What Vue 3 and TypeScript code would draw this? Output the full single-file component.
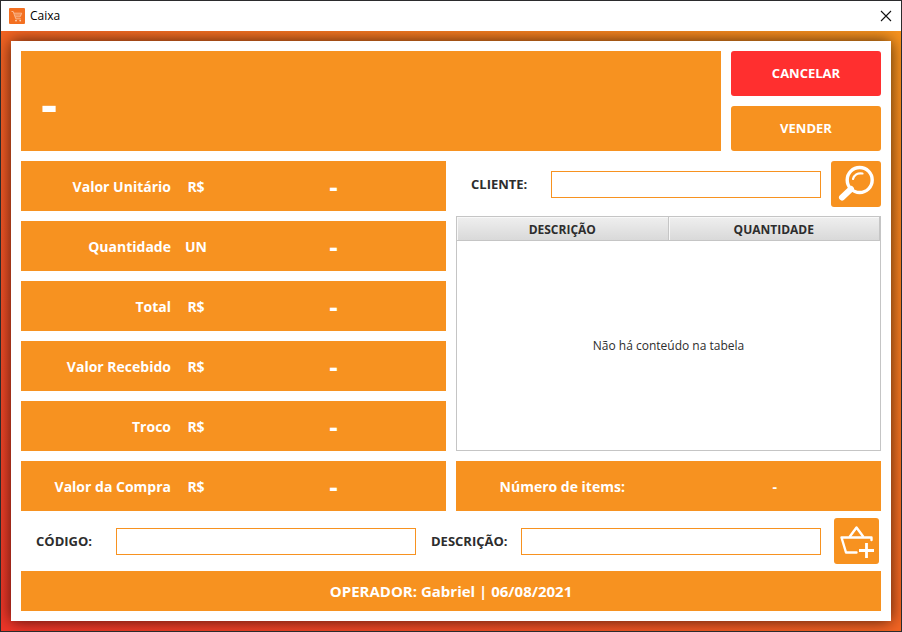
<script setup lang="ts">
import { ref } from 'vue'

interface SaleLine {
  label: string
  unit: string
  value: string
}

const saleLines: SaleLine[] = [
  { label: 'Valor Unitário', unit: 'R$', value: '-' },
  { label: 'Quantidade', unit: 'UN', value: '-' },
  { label: 'Total', unit: 'R$', value: '-' },
  { label: 'Valor Recebido', unit: 'R$', value: '-' },
  { label: 'Troco', unit: 'R$', value: '-' },
  { label: 'Valor da Compra', unit: 'R$', value: '-' },
]

const customer = ref('')
const code = ref('')
const description = ref('')
const operator = 'Gabriel'
const date = '06/08/2021'
</script>

<template>
  <div class="window">
    <header class="titlebar">
      <svg class="app-icon" viewBox="0 0 16 16" aria-hidden="true">
        <rect width="16" height="16" rx="1" fill="#f37021" />
        <path d="M2.500 3.500h1.700l2.600 7.300h5M5 5.200h7.700l-1.500 3.600H6.200M6 7h6" fill="none" stroke="#f9c19c" stroke-width="0.900" />
        <circle cx="7" cy="12.600" r="0.900" fill="#fbd5bb" />
        <circle cx="11.200" cy="12.600" r="0.900" fill="#fbd5bb" />
      </svg>
      <span class="title">Caixa</span>
      <button class="close" type="button" aria-label="Fechar">
        <svg viewBox="0 0 12 12" aria-hidden="true">
          <path d="M1 1l10 10M11 1L1 11" stroke="#111" stroke-width="1.100" fill="none" />
        </svg>
      </button>
    </header>

    <div class="backdrop">
      <main class="panel">
        <section class="top">
          <h1 class="product">-</h1>
          <div class="actions">
            <button class="btn danger" type="button">CANCELAR</button>
            <button class="btn" type="button">VENDER</button>
          </div>
        </section>

        <section class="middle">
          <dl class="lines">
            <div v-for="line in saleLines" :key="line.label" class="line">
              <dt>{{ line.label }}</dt>
              <dd class="unit">{{ line.unit }}</dd>
              <dd class="value">{{ line.value }}</dd>
            </div>
          </dl>

          <div class="side">
            <div class="customer">
              <label for="customer">CLIENTE:</label>
              <input id="customer" v-model="customer" type="text" />
              <button class="btn icon" type="button" aria-label="Buscar cliente">
                <svg viewBox="0 0 50 46" aria-hidden="true">
                  <circle cx="28.700" cy="19" r="12.500" fill="none" stroke="#fff" stroke-width="3.400" />
                  <path d="M20 28L11 36.500" stroke="#fff" stroke-width="6" stroke-linecap="round" />
                  <path d="M22 18c1-3.800 4.500-6.400 9.500-5.500" fill="none" stroke="#fff" stroke-width="2.200" stroke-linecap="round" />
                </svg>
              </button>
            </div>

            <div class="grid">
              <table>
                <thead>
                  <tr>
                    <th scope="col">DESCRIÇÃO</th>
                    <th scope="col">QUANTIDADE</th>
                  </tr>
                </thead>
                <tbody>
                  <tr>
                    <td colspan="2">Não há conteúdo na tabela</td>
                  </tr>
                </tbody>
              </table>
            </div>

            <div class="count">
              <span>Número de items:</span>
              <span>-</span>
            </div>
          </div>
        </section>

        <section class="entry">
          <label for="code">CÓDIGO:</label>
          <input id="code" v-model="code" type="text" />
          <label for="description">DESCRIÇÃO:</label>
          <input id="description" v-model="description" type="text" />
          <button class="btn icon basket" type="button" aria-label="Adicionar item">
            <svg viewBox="0 0 45 46" aria-hidden="true">
              <path d="M37.500 22v-2.500H7.500L12 34.500h10.500" fill="none" stroke="#fff" stroke-width="2.400" stroke-linejoin="round" stroke-linecap="round" />
              <path d="M15.500 19L22.500 9.500L29.500 19" fill="none" stroke="#fff" stroke-width="2.400" stroke-linejoin="round" />
              <path d="M32.500 25v15M25 32.500h15" fill="none" stroke="#fff" stroke-width="2.800" />
            </svg>
          </button>
        </section>

        <footer class="operator">OPERADOR: {{ operator }} | {{ date }}</footer>
      </main>
    </div>
  </div>
</template>

<style>
body {
  margin: 0;
}
</style>

<style scoped>
.window {
  --orange: #f79220;
  box-sizing: border-box;
  min-height: 100vh;
  display: flex;
  flex-direction: column;
  border: 1px solid #2b2b2d;
  background: #fff;
  color: #2d2d2d;
  font-family: 'Open Sans', 'Noto Sans', sans-serif;
  font-size: 12px;
}

.titlebar {
  display: flex;
  align-items: center;
  gap: 5px;
  height: 30px;
  padding: 0 7px 0 8px;
}

.app-icon {
  width: 16px;
  height: 16px;
}

.title {
  flex: 1;
  color: #000;
  line-height: 16px;
}

.close {
  display: flex;
  padding: 2px;
  border: 0;
  background: none;
}

.close svg {
  width: 12px;
  height: 12px;
}

.backdrop {
  flex: 1;
  display: flex;
  padding: 10px;
  background: linear-gradient(to top right, #ef3528, #f7931e);
  overflow: hidden;
}

.panel {
  flex: 1;
  display: flex;
  flex-direction: column;
  padding: 10px;
  background: #fff;
  box-shadow: 0 0 15px rgba(0, 0, 0, 0.7);
}

.top {
  display: flex;
  gap: 10px;
  margin-bottom: 10px;
}

.product {
  flex: 1;
  display: flex;
  align-items: center;
  min-height: 100px;
  margin: 0;
  padding: 4px 20px 0;
  box-sizing: border-box;
  background: var(--orange);
  color: #fff;
  font-size: 50px;
  line-height: 60px;
}

.actions {
  display: flex;
  flex-direction: column;
  gap: 10px;
  width: 150px;
}

.btn {
  flex: 1;
  padding: 0 0 2px;
  border: 0;
  border-radius: 3px;
  background: var(--orange);
  color: #fff;
  font: bold 13px 'Open Sans', 'Noto Sans', sans-serif;
}

.danger {
  background: #ff2f2f;
}

.icon {
  flex: none;
  display: flex;
  width: 50px;
  height: 46px;
  padding: 0;
}

.icon svg {
  width: 100%;
  height: 100%;
}

.middle {
  flex: 1;
  display: grid;
  grid-template-columns: 1fr 1fr;
  gap: 10px;
}

.lines {
  display: grid;
  grid-auto-rows: 1fr;
  gap: 10px;
  margin: 0;
}

.line {
  display: grid;
  grid-template-columns: 150px 50px 1fr;
  align-items: center;
  min-height: 50px;
  background: var(--orange);
  color: #fff;
  font-size: 14px;
  font-weight: bold;
}

.line dt {
  text-align: right;
}

.line dd {
  margin: 0;
  text-align: center;
}

.line .value {
  padding-top: 2px;
  font-size: 26px;
  line-height: 30px;
}

.side {
  display: flex;
  flex-direction: column;
  min-width: 0;
}

.customer {
  display: flex;
  align-items: center;
  gap: 10px;
  margin-bottom: 9px;
  padding-left: 15px;
}

.customer label {
  width: 70px;
}

.customer input {
  flex: 1;
}

label {
  font-size: 13px;
  line-height: 18px;
  font-weight: bold;
}

input {
  box-sizing: border-box;
  min-width: 0;
  height: 27px;
  padding: 0 6px;
  border: 1px solid var(--orange);
  background: #fff;
  font: 12px 'Open Sans', 'Noto Sans', sans-serif;
  outline: none;
}

.grid {
  flex: 1;
  display: flex;
  border: 1px solid #c5c5c5;
}

table {
  width: 100%;
  border-collapse: separate;
  border-spacing: 0;
  table-layout: fixed;
}

th {
  height: 21px;
  box-sizing: content-box;
  padding: 2px 0 0;
  border-right: 1px solid #c5c5c5;
  border-bottom: 1px solid #c5c5c5;
  background: linear-gradient(#efefef, #d9d9d9);
  box-shadow: inset 1px 1px #f8f8f8;
  font-size: 12px;
  line-height: 18px;
}

td {
  padding: 0;
  text-align: center;
  vertical-align: middle;
}

.count {
  display: grid;
  grid-template-columns: 1fr 1fr;
  align-items: center;
  min-height: 50px;
  margin-top: 10px;
  background: var(--orange);
  color: #fff;
  font-size: 14px;
  font-weight: bold;
  text-align: center;
}

.entry {
  display: grid;
  grid-template-columns: 80px 1fr 105px 1fr 60px;
  align-items: center;
  height: 60px;
  padding-left: 15px;
}

.entry label[for='description'] {
  padding-left: 15px;
}

.basket {
  width: 45px;
  margin-right: 2px;
  justify-self: end;
}

.operator {
  display: flex;
  align-items: center;
  justify-content: center;
  height: 40px;
  background: var(--orange);
  color: #fff;
  font-size: 15px;
  font-weight: bold;
}
</style>
